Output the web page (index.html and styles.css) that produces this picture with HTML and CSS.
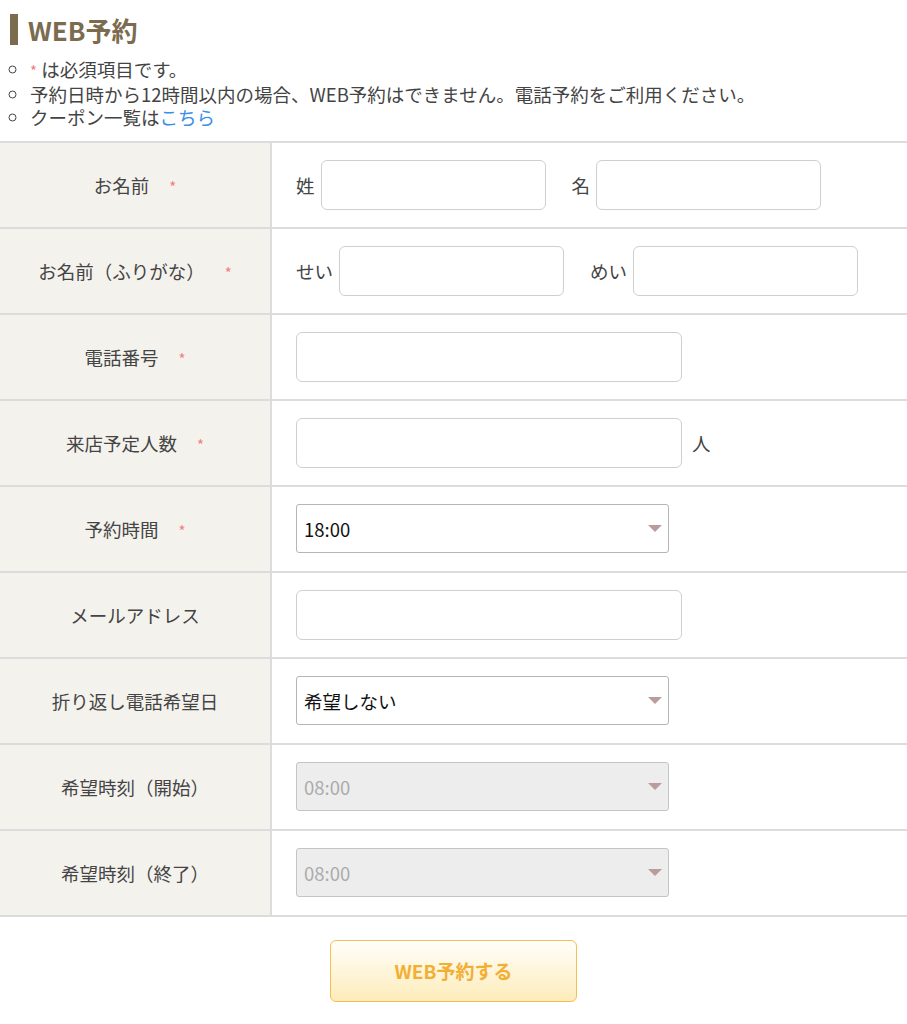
FILE: index.html
```html
<html>
<head>
    <meta charset="utf-8">
    <title>WEB予約</title>
    <link rel="stylesheet" href="styles.css">
</head>
<body>
    <div class="reserve">
        <h2 class="reserve-title">WEB予約</h2>
        <ul class="notes">
            <li><span class="req">*</span> は必須項目です。</li>
            <li>予約日時から12時間以内の場合、WEB予約はできません。電話予約をご利用ください。</li>
            <li>クーポン一覧は<a href="#">こちら</a></li>
        </ul>

        <form class="reserve-form">
            <table class="form-table">
                <tr>
                    <th>お名前<span class="req">*</span></th>
                    <td>
                        <div class="pair">
                            <label>姓</label><input type="text" class="input short">
                            <label class="second">名</label><input type="text" class="input short">
                        </div>
                    </td>
                </tr>
                <tr>
                    <th>お名前（ふりがな）<span class="req">*</span></th>
                    <td>
                        <div class="pair">
                            <label>せい</label><input type="text" class="input short">
                            <label class="second">めい</label><input type="text" class="input short">
                        </div>
                    </td>
                </tr>
                <tr>
                    <th>電話番号<span class="req">*</span></th>
                    <td><input type="text" class="input wide"></td>
                </tr>
                <tr>
                    <th>来店予定人数<span class="req">*</span></th>
                    <td>
                        <div class="pair">
                            <input type="text" class="input wide"><label class="unit">人</label>
                        </div>
                    </td>
                </tr>
                <tr>
                    <th>予約時間<span class="req">*</span></th>
                    <td>
                        <div class="select-wrap">
                            <select class="select"><option>18:00</option></select>
                        </div>
                    </td>
                </tr>
                <tr>
                    <th>メールアドレス</th>
                    <td><input type="text" class="input wide"></td>
                </tr>
                <tr>
                    <th>折り返し電話希望日</th>
                    <td>
                        <div class="select-wrap">
                            <select class="select"><option>希望しない</option></select>
                        </div>
                    </td>
                </tr>
                <tr>
                    <th>希望時刻（開始）</th>
                    <td>
                        <div class="select-wrap">
                            <select class="select" disabled><option>08:00</option></select>
                        </div>
                    </td>
                </tr>
                <tr>
                    <th>希望時刻（終了）</th>
                    <td>
                        <div class="select-wrap">
                            <select class="select" disabled><option>08:00</option></select>
                        </div>
                    </td>
                </tr>
            </table>

            <div class="submit-row">
                <button type="submit" class="submit-btn">WEB予約する</button>
            </div>
        </form>
    </div>
</body>
</html>
```

FILE: styles.css
```css
body {
    margin: 0;
    padding: 0;
    font-family: "Noto Sans CJK JP", "Noto Sans", sans-serif;
    color: #444;
    background: #fff;
}

.reserve-title {
    margin: 14px 0 0 10px;
    padding-left: 10px;
    border-left: 8px solid #7b6b4f;
    color: #7b6b4f;
    font-size: 26px;
    font-weight: bold;
    line-height: 31px;
}

.notes {
    margin: 13px 0 11px 0;
    padding-left: 30px;
    list-style: circle;
    font-size: 18.5px;
    line-height: 23.5px;
    color: #444;
}

.notes a {
    color: #3a8ee6;
    text-decoration: none;
}

.req {
    color: #f08080;
    font-size: 15px;
}

.form-table th .req {
    margin-left: 20px;
}

.form-table {
    width: 100%;
    border-collapse: collapse;
}

.form-table tr {
    height: 86px;
}

.form-table th {
    width: 270px;
    background-color: #f4f2ed;
    border-top: 2px solid #dcdcdc;
    border-bottom: 2px solid #dcdcdc;
    border-right: 2px solid #dcdcdc;
    font-size: 18.5px;
    font-weight: normal;
    color: #444;
    text-align: center;
    padding: 0;
}

.form-table td {
    border-top: 2px solid #dcdcdc;
    border-bottom: 2px solid #dcdcdc;
    padding: 0 0 0 24px;
    font-size: 18.5px;
}

.pair {
    display: flex;
    align-items: center;
}

.pair label {
    margin-right: 6px;
}

.pair label.second {
    margin-left: 26px;
}

.pair label.unit {
    margin-left: 10px;
}

.input {
    box-sizing: border-box;
    height: 50px;
    border: 1px solid #cfcfcf;
    border-radius: 6px;
    font-size: 18px;
    padding: 0 8px;
    background: #fff;
}

.input.short {
    width: 225px;
}

.input.wide {
    width: 386px;
}

.select-wrap {
    position: relative;
    width: 373px;
}

.select-wrap::after {
    content: "";
    position: absolute;
    right: 7px;
    top: 21px;
    border-left: 7px solid transparent;
    border-right: 7px solid transparent;
    border-top: 7px solid #bb9c9c;
    pointer-events: none;
}

.select {
    box-sizing: border-box;
    width: 373px;
    height: 49px;
    -webkit-appearance: none;
    appearance: none;
    border: 1px solid #b5b5b5;
    border-radius: 3px;
    background: #fff;
    font-family: "Noto Sans CJK JP", "Noto Sans", sans-serif;
    font-size: 18.5px;
    color: #111;
    padding: 0 7px;
}

.select:disabled {
    background: #ededed;
    color: #ababab;
    border-color: #c4c4c4;
    opacity: 1;
}

.submit-row {
    display: flex;
    justify-content: center;
    padding: 23px 0 22px;
}

.submit-btn {
    width: 247px;
    height: 62px;
    border: 1px solid #f6bf4f;
    border-radius: 6px;
    background: linear-gradient(to bottom, #fffefa, #fdecba);
    color: #f2af33;
    font-family: "Noto Sans CJK JP", "Noto Sans", sans-serif;
    font-size: 19px;
    font-weight: bold;
    cursor: pointer;
}
```
